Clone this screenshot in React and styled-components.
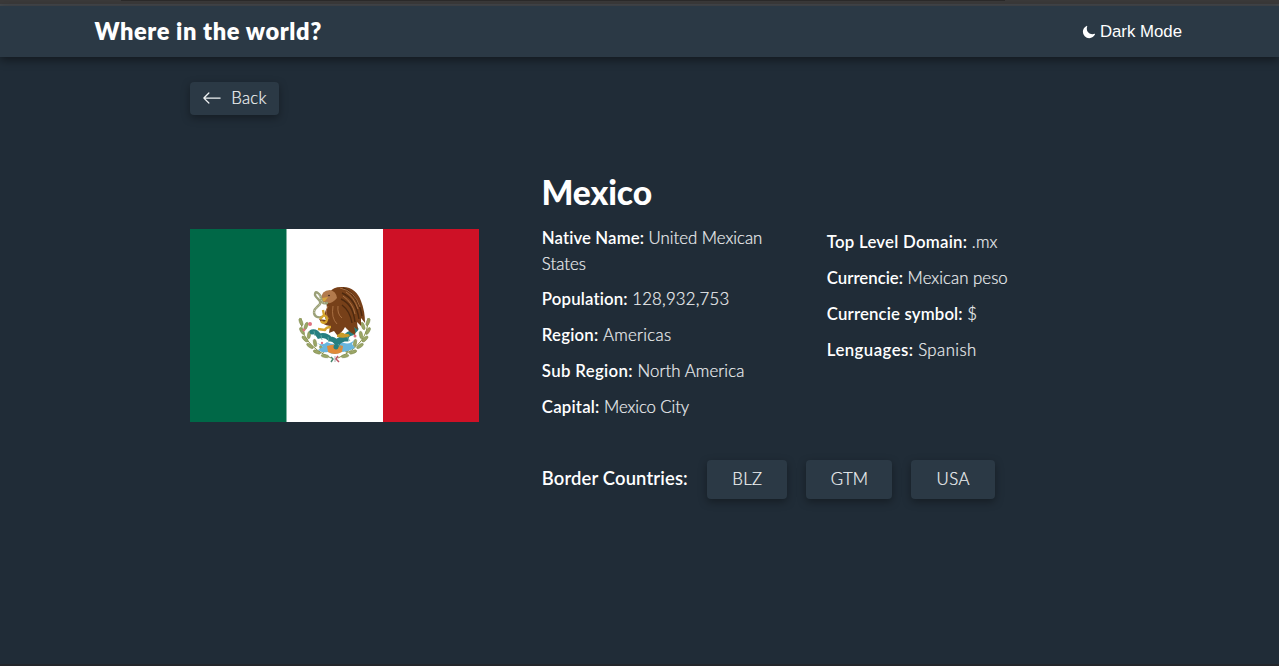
import React from "react";
import styled, { createGlobalStyle } from "styled-components";
import { IoMoon } from "react-icons/io5";
import { BsArrowLeft } from "react-icons/bs";

const GlobalStyle = createGlobalStyle`
  * { box-sizing: border-box; }
  body {
    margin: 0;
    background: #202c37;
    color: #fff;
    font-family: Lato, "Open Sans", sans-serif;
    font-size: 16.8px;
    line-height: 25.2px;
  }
`;

const Page = styled.div`
  height: 666px;
  display: flex;
  flex-direction: column;
  overflow: hidden;
  border-bottom: 2px solid #23262b;
`;

const WindowEdge = styled.div`
  flex: none;
  height: 6px;
  background: #3b3a3a;
  border-bottom: 2px solid #43474b;
  display: flex;
  align-items: flex-start;
  padding-left: 121px;
`;

const EdgeLine = styled.div`
  width: 884px;
  height: 1px;
  background: #2b2a2a;
`;

const Header = styled.header`
  flex: none;
  height: 51px;
  padding: 0 97px 0 94.5px;
  display: flex;
  align-items: center;
  justify-content: space-between;
  background: #2b3945;
  box-shadow: 0 3px 9px rgba(0, 0, 0, 0.45);
`;

const Track = styled.span`
  letter-spacing: ${(p) => p.$ls || 0}px;
`;

const Brand = styled.h1`
  margin: 0;
  padding-bottom: 2px;
  font-size: 23.6px;
  font-weight: 800;
  line-height: 32px;
`;

const ModeButton = styled.button`
  display: flex;
  align-items: center;
  gap: 4px;
  padding: 0;
  border: 0;
  background: none;
  color: #fff;
  font: 16.8px/24px "Liberation Sans", Arial, sans-serif;
`;

const Main = styled.main`
  padding: 25px 190px 0;
`;

const Tile = styled.button`
  display: flex;
  align-items: center;
  justify-content: center;
  width: ${(p) => p.$w}px;
  height: ${(p) => p.$h}px;
  padding: 0 0 ${(p) => (p.$h > 35 ? 1 : 2)}px;
  gap: 9px;
  border: 0;
  border-radius: 4px;
  background: #2b3945;
  color: #f0f2f3;
  font: 300 16.8px/24px Lato, sans-serif;
  letter-spacing: ${(p) => p.$ls || 0}px;
  -webkit-text-stroke: 0.2px #f0f2f3;
  box-shadow: 0 3px 8px rgba(0, 0, 0, 0.35);
`;

const Country = styled.section`
  display: grid;
  grid-template-columns: 289px 1fr;
  column-gap: 62.8px;
  padding-top: 58px;
`;

const Flag = styled.svg`
  display: block;
  width: 289px;
  height: 193px;
  margin-top: 56px;
`;

const Name = styled.h2`
  margin: 0 0 0 -0.3px;
  font-size: 33.6px;
  font-weight: 900;
  line-height: 38px;
`;

const Facts = styled.div`
  display: grid;
  grid-template-columns: 230px 230px;
  column-gap: 55px;
  padding-top: 14.4px;
`;

const FactList = styled.ul`
  list-style: none;
  margin: 0;
  padding: ${(p) => p.$top || 0}px 0 0;
  display: flex;
  flex-direction: column;
  gap: 10.6px;
`;

const Fact = styled.li`
  font-weight: 300;
  color: #eceef0;
  -webkit-text-stroke: 0.2px #eceef0;
`;

const Label = styled.b`
  font-weight: 600;
  color: #fff;
  -webkit-text-stroke: 0;
  letter-spacing: ${(p) => p.$ls || 0}px;
`;

const Borders = styled.div`
  display: flex;
  align-items: center;
  padding-top: 40.6px;
`;

const BorderTitle = styled.h3`
  margin: 0;
  width: 165.5px;
  font-size: 18.4px;
  font-weight: 600;
  padding-bottom: 1px;
`;

const BorderList = styled.div`
  display: flex;
  gap: 19px;
`;

const leaves = [
  [301, 322, 70], [302, 331, 60], [305, 339, 45], [310, 346, 35], [317, 352, 20], [325, 356, 10],
  [306, 326, 110], [309, 335, 100], [315, 343, 80], [322, 349, 60],
  [368, 322, -70], [368, 331, -60], [365, 339, -45], [360, 346, -35], [353, 352, -20], [345, 356, -10],
  [363, 326, -110], [361, 335, -100], [355, 343, -80], [348, 349, -60],
];

function MexicanFlag() {
  return (
    <Flag viewBox="190 229 289 193" role="img" aria-label="Flag of Mexico">
      <rect x="190" y="229" width="97" height="193" fill="#006847" />
      <rect x="286.5" y="229" width="96.5" height="193" fill="#fff" />
      <rect x="383" y="229" width="96" height="193" fill="#ce1126" />
      <path d="M301 318q-1 26 30 40M368 318q1 26-30 40" fill="none" stroke="#8d9548" strokeWidth="1" />
      {leaves.map(([x, y, a]) => (
        <ellipse key={`${x}-${y}`} cx={x} cy={y} rx="3.9" ry="1.6" fill="#9ba666" stroke="#7d8850" strokeWidth=".5" transform={`rotate(${a} ${x} ${y})`} />
      ))}
      {/* lake and rock */}
      <path d="M317 343q6 3 10-1 7 4 14 0 9 4 14-3l-3 5 3 4q-8 4-14 4-7 4-13 0-6 1-10-2l5-3z" fill="#68b5de" />
      <path d="M327 346q8-3 16 0l-1 6q-7 4-14 0z" fill="#e08b38" />
      {/* cactus */}
      <path d="M312 332q4-1 7 4 7-2 11 3 4 0 6 3l5-3 5 0q0-5 6-6l4-4M336 347q1-6 8-8" fill="none" stroke="#267f80" strokeWidth="5" strokeLinecap="round" />
      <path d="M314 331l1 5M321 335l1 5M328 337l1 5M347 337l3 4M338 344l3 4" stroke="#63aaa2" strokeWidth=".8" />
      <g fill="#df7280">
        <circle cx="310" cy="324" r="2" /><circle cx="304" cy="330" r="1.4" />
        <circle cx="355" cy="336" r="1.5" /><circle cx="322" cy="343" r="1.2" />
      </g>
      <path d="M337 334q5-3 8 0 4-1 5 2-5 3-13 1z" fill="#c89c29" />
      {/* eagle */}
      <path d="M330 292q3-5 11-5c10-1 17 5 20 14q4 10 4 22l-4-5 0 8-4-4 1 8-4-3q2 6 1 8-6-3-10-8-3 6-8 8l-3-4-5 2 1-7q-8-1-11-7l7 1q-3-6 1-12l-1-7 4-6z" fill="#774019" />
      <path d="M321 300q0-10 9-10 6 1 7 8-5 6-9 5l-4 1z" fill="#b27a4d" />
      <path d="M343 288q15 6 19 28M342 293q14 6 17 26M341 299q12 5 14 23M342 305q8 6 10 18" fill="none" stroke="#4e290f" strokeWidth="1.4" />
      <path d="M340 288q15 3 20 19M346 292q8 5 12 17M343 296q10 7 12 18M328 306q-4 7 1 13M333 306q-2 12 4 18M338 306q-1 8 4 12" fill="none" stroke="#b47a4b" strokeWidth=".8" />
      <path d="M322 298l6-1-3 4-5 1q0-2 2-4z" fill="#d7a33a" />
      <circle cx="329" cy="295.5" r=".8" fill="#30221a" />
      {/* snake */}
      <path d="M327 303c-8 2-4-6-8-9q-4-4-4 1c1 4 7 5 5 9-2 3-6 4-6 8 0 5 4 6 8 5" fill="none" stroke="#9ba078" strokeWidth="2.4" strokeLinecap="round" />
      <path d="M325 303c-6-1-3-7-7-9M320 304c-2 3-6 5-6 9" fill="none" stroke="#dedfc1" strokeWidth=".7" strokeDasharray="1 1" />
      <path d="M331 327q-5 0-6 3l-7-1M320 319l4-4M324 315l-1-5M324 315q5 3 2 7-3 2-5-1" fill="none" stroke="#d5a42c" strokeWidth="2.4" strokeLinejoin="round" />
      {/* ribbon */}
      <path d="M331 357l2 2-2 3" fill="none" stroke="#4b8970" strokeWidth="1.5" />
      <path d="M335 356v6" stroke="#c9c9cd" strokeWidth="1.5" />
      <path d="M338 356l-2 3 3 3" fill="none" stroke="#bd5360" strokeWidth="1.5" />
    </Flag>
  );
}

const leftFacts = [
  ["Native Name:", "United Mexican States", 0.1, 0],
  ["Population:", "128,932,753", 0.15, 0.2],
  ["Region:", "Americas", 0.2, 0.3],
  ["Sub Region:", "North America", 0.35, 0.1],
  ["Capital:", "Mexico City", 0.2, -0.1],
];

const rightFacts = [
  ["Top Level Domain:", ".mx", 0.25, 0.2],
  ["Currencie:", "Mexican peso", 0, 0.05],
  ["Currencie symbol:", "$", 0.15, 0],
  ["Lenguages:", "Spanish", 0.45, 0.45],
];

function FactColumn({ facts, top }) {
  return (
    <FactList $top={top}>
      {facts.map(([label, value, a, b]) => (
        <Fact key={label}>
          <Label $ls={a}>{label}</Label> <Track $ls={b}>{value}</Track>
        </Fact>
      ))}
    </FactList>
  );
}

export default function App() {
  return (
    <Page>
      <GlobalStyle />
      <WindowEdge><EdgeLine /></WindowEdge>
      <Header>
        <Brand><Track $ls={0.6}>Where in the world?</Track></Brand>
        <ModeButton><IoMoon size={14} />Dark Mode</ModeButton>
      </Header>
      <Main>
        <Tile $w={89} $h={33} $ls={0.2}><BsArrowLeft size={20} />Back</Tile>
        <Country>
          <MexicanFlag />
          <div>
            <Name><Track $ls={-0.1}>Mexico</Track></Name>
            <Facts>
              <FactColumn facts={leftFacts} />
              <FactColumn facts={rightFacts} top={4} />
            </Facts>
            <Borders>
              <BorderTitle><Track $ls={0.15}>Border Countries:</Track></BorderTitle>
              <BorderList>
                <Tile $w={80} $h={39} $ls={0.4}>BLZ</Tile>
                <Tile $w={86} $h={39}>GTM</Tile>
                <Tile $w={84} $h={39} $ls={0.5}>USA</Tile>
              </BorderList>
            </Borders>
          </div>
        </Country>
      </Main>
    </Page>
  );
}
